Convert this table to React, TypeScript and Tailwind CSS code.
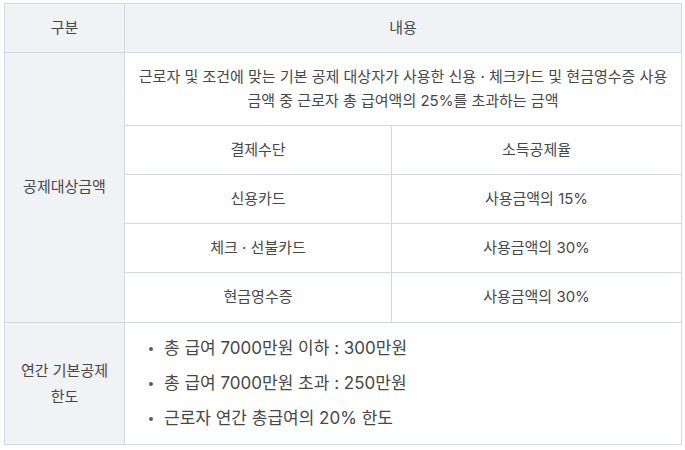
import React from 'react'

const rates = [
  { method: '신용카드', rate: '사용금액의 15%' },
  { method: '체크 · 선불카드', rate: '사용금액의 30%' },
  { method: '현금영수증', rate: '사용금액의 30%' },
]

const limits = [
  '총 급여 7000만원 이하 : 300만원',
  '총 급여 7000만원 초과 : 250만원',
  '근로자 연간 총급여의 20% 한도',
]

export default function App() {
  return (
    <div className="min-h-[450px] bg-white pt-[3px] pl-[4px] text-[15px] text-[#474747] [font-family:Inter,'Noto_Sans_CJK_KR',sans-serif]">
      <div className="w-[678px] border border-[#d3d8e0]">
        {/* header */}
        <div className="flex h-[49px] border-b border-[#d3d8e0] bg-[#f0f2f6]">
          <div className="flex w-[120px] items-center justify-center border-r border-[#d3d8e0]">구분</div>
          <div className="flex flex-1 items-center justify-center">내용</div>
        </div>

        {/* 공제대상금액 */}
        <div className="flex border-b border-[#d3d8e0]">
          <div className="flex w-[120px] items-center justify-center border-r border-[#d3d8e0] bg-[#f0f2f6]">
            공제대상금액
          </div>
          <div className="flex-1">
            <div className="flex h-[73px] items-center justify-center border-b border-[#d3d8e0] px-3 text-center leading-[24px]">
              근로자 및 조건에 맞는 기본 공제 대상자가 사용한 신용 · 체크카드 및 현금영수증 사용
              <br />
              금액 중 근로자 총 급여액의 25%를 초과하는 금액
            </div>
            <div className="flex h-[49px] border-b border-[#d3d8e0]">
              <div className="flex w-[267px] items-center justify-center border-r border-[#d3d8e0]">결제수단</div>
              <div className="flex flex-1 items-center justify-center">소득공제율</div>
            </div>
            {rates.map((r, i) => (
              <div
                key={i}
                className={`flex h-[49px] ${i < rates.length - 1 ? 'border-b border-[#d3d8e0]' : 'h-[48px]'}`}
              >
                <div className="flex w-[267px] items-center justify-center border-r border-[#d3d8e0]">{r.method}</div>
                <div className="flex flex-1 items-center justify-center">{r.rate}</div>
              </div>
            ))}
          </div>
        </div>

        {/* 연간 기본공제 한도 */}
        <div className="flex h-[121px]">
          <div className="flex w-[120px] items-center justify-center border-r border-[#d3d8e0] bg-[#f0f2f6] text-center leading-[26px]">
            연간 기본공제
            <br />
            한도
          </div>
          <ul className="flex flex-1 flex-col justify-center gap-[10px] pl-[24px] text-[17px] leading-[25px]">
            {limits.map((t, i) => (
              <li key={i} className="flex items-center">
                <span className="mr-[11px] h-[4px] w-[4px] rounded-full bg-[#5a5a5a]" />
                {t}
              </li>
            ))}
          </ul>
        </div>
      </div>
    </div>
  )
}
